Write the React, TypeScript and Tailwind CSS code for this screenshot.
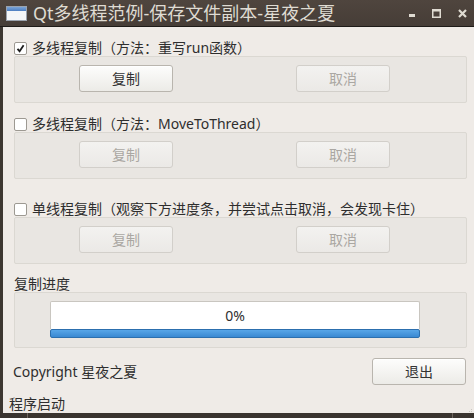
import React from 'react';

const FONT = { fontFamily: '"Noto Sans", "Noto Sans CJK SC", sans-serif' };

const Checkbox = ({ checked }: { checked?: boolean }) => (
  <div className="w-[13px] h-[13px] bg-white border border-[#9d9992] rounded-[2px] flex items-center justify-center">
    {checked && (
      <svg width="9" height="9" viewBox="0 0 9 9">
        <path d="M1.5 4.8 L3.6 7.3 L7.6 1.2" stroke="#1c1c1c" strokeWidth="1.8" fill="none" />
      </svg>
    )}
  </div>
);

const Button = ({ label, disabled }: { label: string; disabled?: boolean }) => (
  <button
    className={`w-[94px] h-[27px] rounded-[3px] border text-[14px] bg-gradient-to-b ${
      disabled
        ? 'border-[#d2cfca] from-[#f3f2f0] to-[#ebe9e6] text-[#aaa7a2]'
        : 'border-[#b9b5ae] from-[#fdfdfc] to-[#ecebe7] text-[#333] shadow-[0_1px_0_#fff_inset]'
    }`}
  >
    {label}
  </button>
);

const Group = ({ label, checked, enabled }: { label: string; checked?: boolean; enabled?: boolean }) => (
  <>
    <div className="h-4 flex items-center gap-[5px] text-[14px] text-[#2e2e2e] leading-none">
      <Checkbox checked={checked} />
      <span>{label}</span>
    </div>
    <div className="h-[47px] w-[453px] bg-[#e9e6e2] border border-[#dbd8d2] rounded-[2px] flex items-start pt-[8px] pl-[64px] gap-[123px]">
      <Button label="复制" disabled={!enabled} />
      <Button label="取消" disabled />
    </div>
  </>
);

export default function App() {
  return (
    <div className="w-[474px] h-[418px] bg-[#3d3731] flex flex-col overflow-hidden" style={FONT}>
      {/* title bar */}
      <div className="h-[26px] bg-gradient-to-b from-[#4f453e] to-[#463d37] flex items-center pl-[6px] pr-[7px]">
        <div className="w-[21px] h-[15px] border border-[#9aa2ad] bg-[#f4f6f8] flex flex-col">
          <div className="h-[4px] bg-gradient-to-b from-[#7aa3d6] to-[#4d7fc2]" />
        </div>
        <span className="ml-[6px] text-[18px] text-[#dfdbd2] leading-none">Qt多线程范例-保存文件副本-星夜之夏</span>
        <div className="ml-auto flex items-center gap-[17px] pt-[1px]">
          <svg width="6" height="9" viewBox="0 0 6 9">
            <rect x="0" y="5" width="6" height="3" fill="#dfdbd2" />
          </svg>
          <svg width="9" height="9" viewBox="0 0 9 9">
            <rect x="0.75" y="0.75" width="7.5" height="7.5" stroke="#dfdbd2" strokeWidth="1.5" fill="none" />
            <rect x="0.5" y="0.5" width="8" height="2" fill="#dfdbd2" />
          </svg>
          <svg width="9" height="9" viewBox="0 0 9 9">
            <path d="M1 1 L8 8 M8 1 L1 8" stroke="#dfdbd2" strokeWidth="2.2" />
          </svg>
        </div>
      </div>
      <div className="h-[1px] bg-[#1e1b18]" />

      {/* body */}
      <div className="flex-1 ml-[3px] bg-[#efebe7] flex flex-col pl-[11px] text-[#2e2e2e] relative">
        <div className="mt-[13px]" />
        <Group label="多线程复制（方法：重写run函数）" checked enabled />
        <div className="mt-[13px]" />
        <Group label="多线程复制（方法：MoveToThread）" />
        <div className="mt-[22px]" />
        <Group label="单线程复制（观察下方进度条，并尝试点击取消，会发现卡住）" />

        <div className="mt-[12px] h-4 flex items-center text-[14px] leading-none">复制进度</div>
        <div className="h-[56px] w-[453px] bg-[#e9e6e2] border border-[#dbd8d2] rounded-[2px] pt-[8px] pl-[35px]">
          <div className="w-[370px] flex flex-col">
            <div className="h-[28px] bg-white border border-[#c9c6c0] border-b-0 rounded-t-[2px] flex items-center justify-center text-[14px] text-[#2e2e2e]">
              0%
            </div>
            <div className="h-[9px] rounded-[2px] border border-[#2c6fae] bg-gradient-to-b from-[#58a6e8] to-[#3a89d2]" />
          </div>
        </div>

        <div className="mt-[9px] h-[29px] w-[452px] flex items-center justify-between pr-0">
          <span className="text-[14px] ml-[-1px]">Copyright 星夜之夏</span>
          <Button label="退出" />
        </div>

        <div className="mt-[9px] h-[17px] ml-[-5px] flex items-center text-[14px] leading-none">程序启动</div>
        <div className="absolute right-[2px] bottom-[1px] grid grid-cols-2 gap-[1px] opacity-60">
          <span className="w-[1px] h-[1px]" />
          <span className="w-[1px] h-[1px] bg-[#b5b1aa]" />
          <span className="w-[1px] h-[1px] bg-[#b5b1aa]" />
          <span className="w-[1px] h-[1px] bg-[#b5b1aa]" />
        </div>
      </div>

      {/* bottom desktop strip */}
      <div className="h-[5px] bg-[#3a342f] flex">
        <div className="w-[27px]" />
        <div className="w-[1px] bg-[#6d655e]" />
        <div className="flex-1" />
        <div className="w-[1px] bg-[#6d655e]" />
        <div className="w-[21px]" />
      </div>
    </div>
  );
}
